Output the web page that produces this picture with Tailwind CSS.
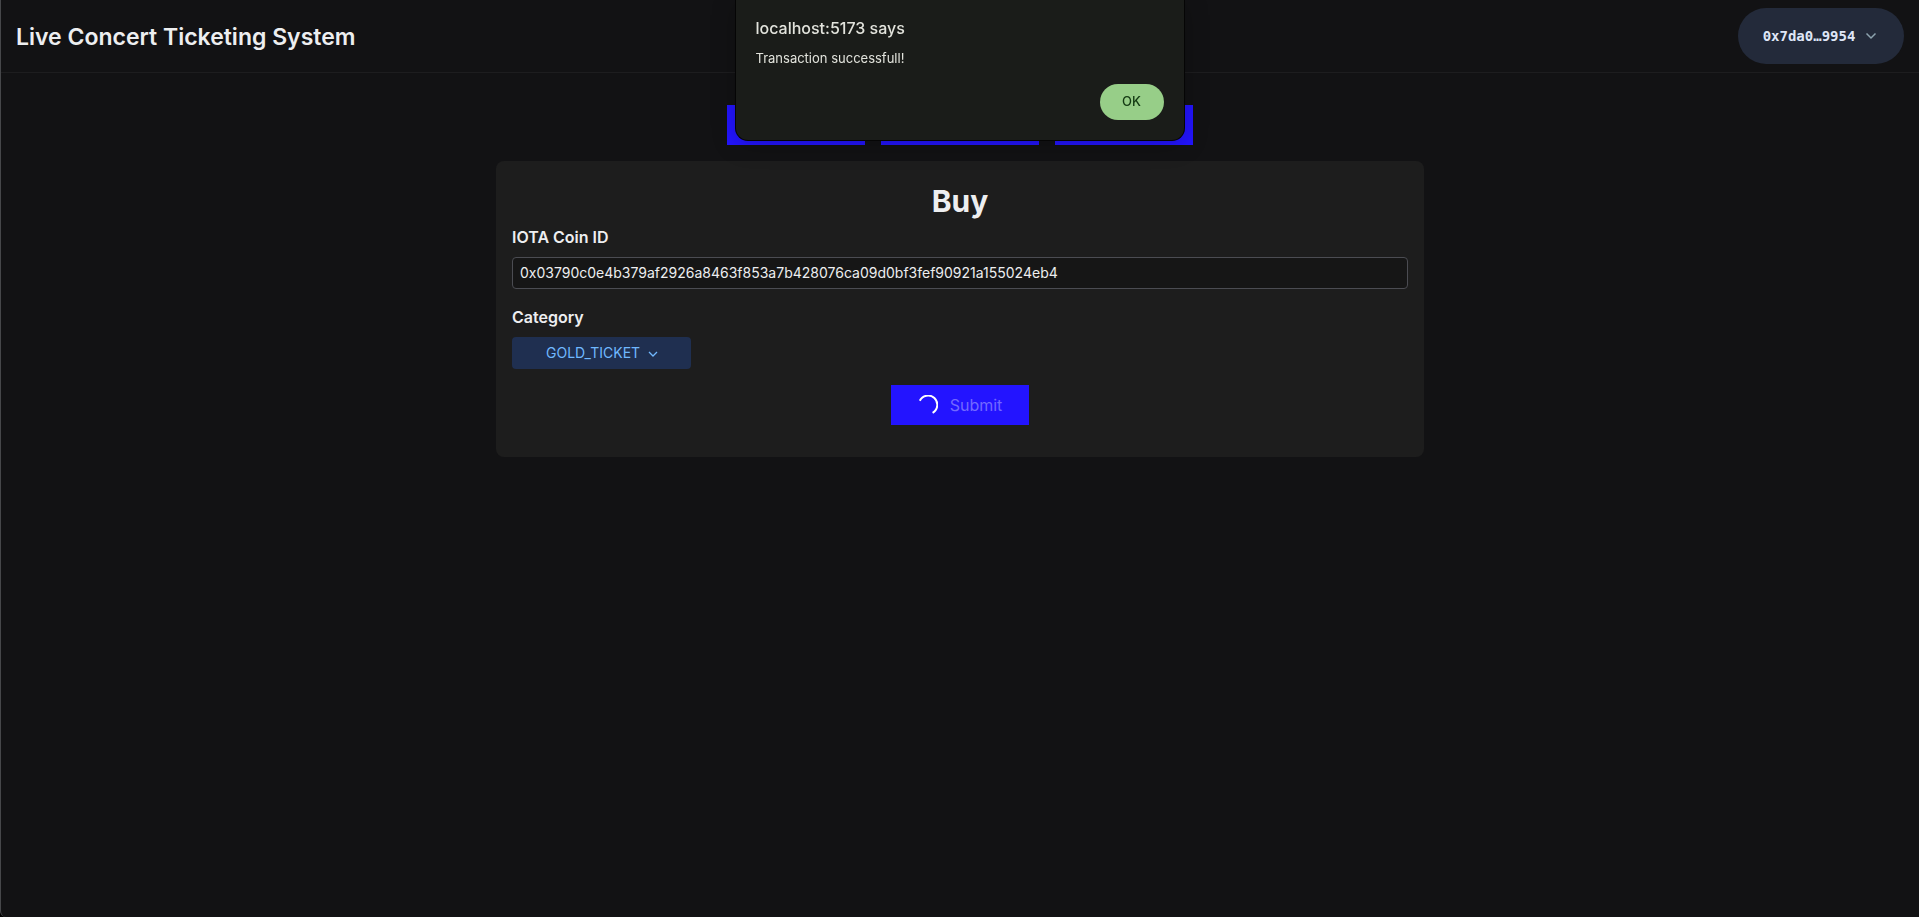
<!DOCTYPE html>
<html lang="en">
<head>
<meta charset="utf-8">
<title>Live Concert Ticketing System</title>
<script src="https://cdn.jsdelivr.net/npm/@tailwindcss/browser@4"></script>
</head>
<body class="bg-black font-['Inter',sans-serif] text-[#edeef0]">
<div class="flex min-h-screen flex-col rounded-bl-md border-l border-[#46474a] bg-[#121214]">
  <header class="flex items-center justify-between border-b border-[#1d1d1f] px-[15px] py-2">
    <h1 class="pt-0.5 text-[23px] font-semibold leading-8">Live Concert Ticketing System</h1>
    <button type="button" class="flex h-14 w-[166px] items-center justify-center gap-2 rounded-full bg-[#232a3a] font-['DejaVu_Sans_Mono',monospace] text-sm font-bold text-[#dfe6f7]">
      0x7da0…9954
      <svg class="size-4" viewBox="0 0 16 16" fill="none" stroke="#8da3ae" stroke-width="1.5" aria-hidden="true"><path d="M3.5 5.5 8 10l4.500-4.500"/></svg>
    </button>
  </header>

  <main class="flex flex-col items-center gap-4 pt-8">
    <nav class="flex gap-4 text-white">
      <button type="button" class="h-10 w-[138px] bg-[#2314ff]" aria-label="Buy"></button>
      <button type="button" class="h-10 w-[158px] bg-[#2314ff]" aria-label="Resell"></button>
      <button type="button" class="h-10 w-[138px] bg-[#2314ff]" aria-label="Tickets"></button>
    </nav>

    <form class="flex w-full max-w-[928px] flex-col rounded-lg bg-[#1d1d1d] px-4 pb-8 pt-5">
      <h2 class="mb-1 text-center text-3xl font-bold leading-10">Buy</h2>
      <label for="coin" class="mb-2 font-semibold">IOTA Coin ID</label>
      <input id="coin" type="text" value="0x03790c0e4b379af2926a8463f853a7b428076ca09d0bf3fef90921a155024eb4" class="mb-4 h-8 w-full rounded border border-[#4b4c52] bg-[#161616] px-[7px] pb-0.5 text-sm">
      <label for="category" class="mb-2 font-semibold">Category</label>
      <div class="relative w-[179px]">
        <select id="category" class="block h-8 w-full appearance-none rounded bg-[#1f2f50] pl-[34px] text-sm text-[#70b8ff]">
          <option>GOLD_TICKET</option>
        </select>
        <svg class="pointer-events-none absolute right-[30px] top-2.5 size-4" viewBox="0 0 16 16" fill="none" stroke="#70b8ff" stroke-width="1.300" aria-hidden="true"><path d="M4 5 8 9l4-4"/></svg>
      </div>
      <button type="submit" disabled class="mt-4 flex h-10 w-[138px] items-center justify-center gap-3 self-center bg-[#2314ff] text-[#7268ff]">
        <svg class="size-5" viewBox="0 0 20 20" fill="none" stroke="#fff" stroke-width="2" aria-hidden="true"><path d="M1.800 5.800A9.200 9.200 0 1 1 14.600 17.800"/></svg>
        Submit
      </button>
    </form>
  </main>
</div>

<div role="alertdialog" aria-labelledby="dlg-title" aria-describedby="dlg-text" class="fixed left-1/2 top-0 flex w-[448px] -translate-x-1/2 flex-col rounded-b-xl bg-[#1a1c19] px-5 pb-5 pt-4 text-[#e2e3dc] shadow-[0_0_0_1px_#050505,0_4px_24px_rgba(0,0,0,0.25)]">
  <h2 id="dlg-title" class="font-medium leading-6">localhost:5173 says</h2>
  <p id="dlg-text" class="mt-2 text-[13px] leading-5">Transaction successfull!</p>
  <button type="button" class="mt-4 h-9 w-16 self-end rounded-full bg-[#97ce88] text-[13px] font-medium text-[#143a13]">OK</button>
</div>
</body>
</html>
